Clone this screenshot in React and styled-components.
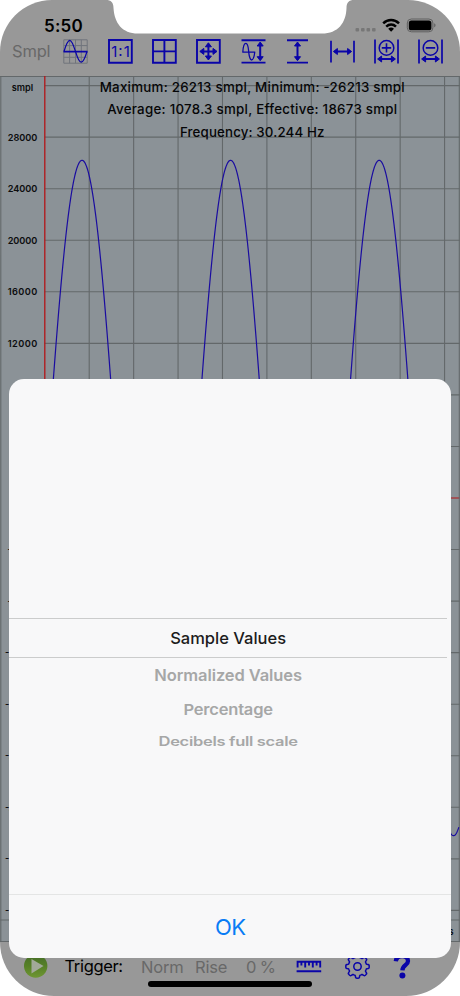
import styled, { createGlobalStyle } from "styled-components"

const GlobalStyle = createGlobalStyle`
*{
box-sizing:border-box;
}
body{
margin:0;
background:#fff;
font-family:Inter,"Liberation Sans",sans-serif;
}
`

const Phone = styled.main`
position:relative;
width:460px;
height:996px;
display:flex;
flex-direction:column;
overflow:hidden;
background:#989898;
border-radius:52px 52px 54px 54px;
`

const Notch = styled.svg`
position:absolute;
top:0;
left:106px;
`

const StatusBar = styled.header`
height:38px;
padding:11px 24px 0 44px;
display:flex;
justify-content:space-between;
align-items:flex-start;
`

const Time = styled.span`
font-size:17px;
line-height:30px;
font-weight:600;
letter-spacing:0.2px;
color:#000;
`

const StatusIcons = styled.div`
display:flex;
align-items:center;
height:28px;
`

const Toolbar = styled.nav`
height:38px;
padding:1px 0 0 12px;
display:flex;
align-items:flex-start;
`

const UnitLabel = styled.span`
width:51.3px;
font-size:16.5px;
line-height:24px;
letter-spacing:-0.2px;
color:#686868;
`

const IconButton = styled.button`
width:${({ $width }) => $width || 25}px;
height:25px;
padding:0;
margin-right:${({ $gap }) => $gap ?? 19.4}px;
border:none;
background:none;
flex-shrink:0;

svg{
display:block;
overflow:visible;
}
`

const Chart = styled.svg`
display:block;
flex-shrink:0;

text{
font-family:Inter,"Liberation Sans",sans-serif;
}
`

const BottomBar = styled.footer`
flex:1;
padding:12px 0 0 23px;
display:flex;
align-items:flex-start;
`

const BarText = styled.span`
width:${({ $width }) => $width}px;
font-size:16.5px;
line-height:${({ $dark }) => ($dark ? 25 : 26)}px;
letter-spacing:${({ $spacing }) => $spacing || 0}px;
white-space:nowrap;
color:${({ $dark }) => ($dark ? "#000" : "#686868")};
`

const HomeIndicator = styled.div`
position:absolute;
left:148px;
bottom:9px;
width:164px;
height:6px;
border-radius:3px;
background:#000;
`

const Sheet = styled.section`
position:absolute;
left:9.3px;
top:379px;
width:441.7px;
height:579px;
display:flex;
flex-direction:column;
border-radius:15px;
background:#f8f8f9;
overflow:hidden;
`

const Picker = styled.div`
flex:1;
padding-top:239px;
margin-right:4px;
display:flex;
flex-direction:column;
`

const Option = styled.div`
height:${({ $height }) => $height || 37}px;
display:flex;
justify-content:center;
align-items:center;
font-size:16.5px;
font-weight:600;
white-space:nowrap;
color:#a6a7a7;

span{
letter-spacing:${({ $spacing }) => $spacing || 0}px;
transform:scaleY(${({ $squash }) => $squash || 1});
}
`

const SelectedOption = styled(Option)`
border-top:1px solid #cbcccc;
border-bottom:1px solid #cbcccc;
font-weight:500;
color:#1c1c1c;
`

const OkButton = styled.button`
height:64px;
padding:0;
border:none;
border-top:1px solid #e4e5e5;
background:none;
font-family:inherit;
font-size:22px;
line-height:65px;
letter-spacing:-0.6px;
color:#087cf5;
`

const BLUE = "#0a04a8"

const AXIS_X = 44.8
const ZERO_Y = 422
const STEP_Y = 51.55
const STEP_X = 44.42
const AMPLITUDE = 337.7
const PERIOD = 148.6
const FIRST_PEAK = 82

const rows = Array.from({ length: 17 }, (_, i) => 8 - i)
const columns = Array.from({ length: 9 }, (_, i) => AXIS_X + STEP_X * (i + 1))

const wave = () => {
  const points = []
  for (let x = AXIS_X; x <= 459; x += 0.5) {
    const y = ZERO_Y - AMPLITUDE * Math.cos(((x - FIRST_PEAK) / PERIOD) * Math.PI * 2)
    points.push(`${x.toFixed(1)},${y.toFixed(2)}`)
  }
  return points.join(" ")
}

const Icon = ({ children, width = 25, strokeWidth = 1.9 }) => (
  <svg width={width} height="25" viewBox={`0 0 ${width} 25`} fill="none" stroke={BLUE} strokeWidth={strokeWidth}>
    {children}
  </svg>
)

// double headed arrows, shaft plus two solid heads
const ArrowV = ({ x, top = 3, bottom = 21.7 }) => (
  <g>
    <path d={`M${x} ${top + 2}V${bottom - 2}`} strokeWidth="2" />
    <path
      d={`M${x} ${top}l3 4h-6zM${x} ${bottom}l3-4h-6z`}
      fill={BLUE}
      strokeWidth="1"
      strokeLinejoin="round"
    />
  </g>
)

const ArrowH = ({ y, left = 3, right = 22 }) => (
  <g>
    <path d={`M${left + 2} ${y}H${right - 2}`} strokeWidth="2" />
    <path
      d={`M${left} ${y}l4-3v6zM${right} ${y}l-4-3v6z`}
      fill={BLUE}
      strokeWidth="1"
      strokeLinejoin="round"
    />
  </g>
)

const WaveGridIcon = () => (
  <Icon>
    <path d="M.8.8h23.4v23.4H.8zM6.6.8v23.4M12.5.8v23.4M18.3.8v23.4M.8 6.6h23.4M.8 18.3h23.4" stroke="#70747c" strokeWidth="1" />
    <path d="M.5 12.700h24" strokeWidth="1.700" />
    <path d="M1 12.500C3.200 5 5 1.300 6.800 1.300c2.200 0 3.800 5.200 5.700 11.200 1.900 6.200 3.600 10.700 5.700 10.700 2 0 3.600-3.500 5.800-10.700" strokeWidth="1.200" />
  </Icon>
)

const OneToOneIcon = () => (
  <Icon>
    <path d="M1 1h22.800v22.800H1z" />
    <text x="12.500" y="17.800" textAnchor="middle" fontSize="15" fontFamily="Inter, sans-serif" textLength="18.500" fill={BLUE} stroke="none">1:1</text>
  </Icon>
)

const GridIcon = () => (
  <Icon>
    <path d="M1 1h22.800v22.800H1zM12.400 1v22.800M1 12.400h22.800" />
  </Icon>
)

const MoveIcon = () => (
  <Icon>
    <path d="M1 1h22.800v22.800H1z" />
    <ArrowV x={12.4} top={3.8} bottom={21} />
    <ArrowH y={12.4} left={3.8} right={21} />
  </Icon>
)

const WaveHeightIcon = () => (
  <Icon>
    <path d="M.5 1.300h24M.5 23.600h24" />
    <path d="M1.800 13.200C2.100 8 3.500 4.400 4.900 4.400c3 0 2.300 7.800 3.400 12.500.7 3 1.200 4.100 2.200 4.100 1.500 0 2.800-3.500 3.300-8.200M1.300 13.200h12.800" strokeWidth="1.300" />
    <ArrowV x={19.2} />
  </Icon>
)

const HeightIcon = () => (
  <Icon>
    <path d="M2 1.300h21M2 23.600h21" />
    <ArrowV x={12.5} />
  </Icon>
)

const WidthIcon = () => (
  <Icon>
    <path d="M1 1.800v21.600M24 1.800v21.600" strokeWidth="1.700" />
    <ArrowH y={12.5} left={3.4} right={21.6} />
  </Icon>
)

const ZoomIcon = ({ plus }) => (
  <Icon>
    <path d="M1 .5v24M24 .5v24" strokeWidth="1.700" />
    <circle cx="12.500" cy="8.900" r="7.300" strokeWidth="1.500" />
    <path d={plus ? "M7.800 8.900h9.400M12.500 4.200v9.400" : "M7.800 8.900h9.400"} strokeWidth="1.600" />
    <ArrowH y={20} left={3.6} right={21.4} />
  </Icon>
)

const PlayIcon = () => (
  <svg width="26" height="25" viewBox="0 0 26 25">
    <defs>
      <linearGradient id="play" x1="0" y1="0" x2="0" y2="1">
        <stop offset="0" stopColor="#466d2a" />
        <stop offset=".5" stopColor="#568026" />
        <stop offset="1" stopColor="#6f9634" />
      </linearGradient>
    </defs>
    <circle cx="12.700" cy="12" r="11.700" fill="url(#play)" />
    <path d="M8.500 5v14.500L20.500 12z" fill="#a2a99a" />
  </svg>
)

const RulerIcon = () => (
  <Icon width={26}>
    <path d="M1.600 13.500V7.700h22.600v5.800M5.400 8v3.500M9.200 8v5.500M13 8v3.500M16.800 8v5.500M20.600 8v3.500M.6 17.300h24.600" strokeWidth="1.900" />
  </Icon>
)

const gearPath = () => {
  const pts = []
  for (let a = 0; a <= 360; a += 3) {
    const t = (a * Math.PI) / 180
    const r = 10.4 + 1.3 * Math.tanh(3 * Math.cos(t * 8 + Math.PI))
    pts.push(`${(12.5 + r * Math.sin(t)).toFixed(2)} ${(12.5 - r * Math.cos(t)).toFixed(2)}`)
  }
  return `M${pts.join("L")}Z`
}

const GearIcon = () => (
  <Icon strokeWidth={1.5}>
    <g transform="rotate(22.5 12.500 12.500)">
      <path d={gearPath()} strokeLinejoin="round" />
    </g>
    <circle cx="12.500" cy="12.500" r="3.700" />
  </Icon>
)

const HelpIcon = () => (
  <Icon width={18}>
    <path d="M1.800 7.300C2.200 3.600 4.700 2 8.200 2s5.800 1.800 5.800 4.900c0 4.400-5.500 4.300-5.600 9.500" strokeWidth="4.300" />
    <circle cx="8.400" cy="21.500" r="3" fill={BLUE} stroke="none" />
  </Icon>
)

const Scope = () => (
  <Chart width="460" height="866" viewBox="0 0 460 866">
    <rect width="460" height="866" fill="#8b9297" />
    <g stroke="#63686a" strokeWidth="1.100">
      {rows.map((n) => (
        <path key={n} d={`M${AXIS_X} ${ZERO_Y - n * STEP_Y}H460`} stroke={n === 0 ? "#b31418" : undefined} />
      ))}
      {columns.map((x) => (
        <path key={x} d={`M${x} 0V844`} />
      ))}
      <path d="M0 .5H460M0 844H460M0 865.500H460M.8 0V866M459.300 0V866" />
    </g>
    <path d={`M${AXIS_X} 0V844`} stroke="#b31418" strokeWidth="1.300" />
    <polyline points={wave()} fill="none" stroke="#1a0ca0" strokeWidth="1.200" />
    <g fontSize="9.200" fontWeight="600" textAnchor="middle" fill="#0c0d0e">
      <text x="22.500" y="14.500" textLength="21.500">smpl</text>
      {rows.filter((n) => n < 8).map((n) => (
        <text
          key={n}
          x={n < 0 ? 21.5 : 22.5}
          y={ZERO_Y - n * STEP_Y + 3.4}
          textLength={n === 0 ? undefined : Math.abs(n) < 3 ? (n < 0 ? 28 : 24) : n < 0 ? 33 : 29.5}
        >
          {n * 4000}
        </text>
      ))}
      <text x="451" y="859">s</text>
    </g>
    <g fontSize="13.300" fontWeight="500" textAnchor="middle" fill="#060607">
      <text x="252.200" y="16" textLength="305">Maximum: 26213 smpl, Minimum: -26213 smpl</text>
      <text x="252.200" y="38.300" textLength="290">Average: 1078.3 smpl, Effective: 18673 smpl</text>
      <text x="252.200" y="60.500" textLength="144.500">Frequency: 30.244 Hz</text>
    </g>
  </Chart>
)

const App = () => {
  return (
    <>
      <GlobalStyle />
      <Phone>
        <StatusBar>
          <Time>5:50</Time>
          <StatusIcons>
            <svg width="81" height="28" viewBox="0 0 81 28">
              <g fill="#777">
                <rect x=".5" y="17" width="3.600" height="3.600" rx="1" />
                <rect x="6" y="17" width="3.600" height="3.600" rx="1" />
                <rect x="11.500" y="17" width="3.600" height="3.600" rx="1" />
                <rect x="17" y="17" width="3.600" height="3.600" rx="1" />
              </g>
              <g fill="none" stroke="#000" strokeWidth="2.500">
                <path d="M28.200 12.300c4.500-4.300 11.300-4.300 15.800 0M31.200 15.600c2.900-2.700 6.900-2.700 9.800 0" />
              </g>
              <path d="M33.200 17.700c1.800-1.500 4-1.500 5.800 0l-2.900 3z" />
              <rect x="52.300" y="8" width="25.600" height="12.800" rx="4" fill="none" stroke="#606060" />
              <rect x="53.800" y="9.500" width="22.600" height="9.800" rx="2.600" />
              <path d="M79.200 12.300c1.800.6 1.800 3.400 0 4z" fill="#606060" />
            </svg>
          </StatusIcons>
        </StatusBar>

        <Toolbar>
          <UnitLabel>Smpl</UnitLabel>
          <IconButton><WaveGridIcon /></IconButton>
          <IconButton><OneToOneIcon /></IconButton>
          <IconButton><GridIcon /></IconButton>
          <IconButton><MoveIcon /></IconButton>
          <IconButton><WaveHeightIcon /></IconButton>
          <IconButton><HeightIcon /></IconButton>
          <IconButton><WidthIcon /></IconButton>
          <IconButton><ZoomIcon plus /></IconButton>
          <IconButton $gap={0}><ZoomIcon /></IconButton>
        </Toolbar>

        <Scope />

        <BottomBar>
          <IconButton $width={26} $gap={15.5}><PlayIcon /></IconButton>
          <BarText $dark $width={76.5} $spacing={-0.35}>Trigger:</BarText>
          <BarText $width={54} $spacing={-0.2}>Norm</BarText>
          <BarText $width={51} $spacing={-0.2}>Rise</BarText>
          <BarText $width={50} $spacing={-0.6}>0 %</BarText>
          <IconButton $width={26} $gap={23}><RulerIcon /></IconButton>
          <IconButton $gap={24}><GearIcon /></IconButton>
          <IconButton $width={18} $gap={0}><HelpIcon /></IconButton>
        </BottomBar>

        <Notch width="248" height="34" viewBox="0 0 248 34">
          <path d="M0 0C5 0 7.500 2.500 7.500 8 8.500 23 16 33.500 32 33.500H216C232 33.500 240 23 240.500 8 240.500 2.500 243 0 248 0Z" fill="#fff" />
        </Notch>
        <HomeIndicator />

        <Sheet>
          <Picker>
            <SelectedOption $height={39.5}><span>Sample Values</span></SelectedOption>
            <Option $height={35} $squash={0.98} $spacing={-0.1}><span>Normalized Values</span></Option>
            <Option $height={34} $squash={0.9} $spacing={-0.2}><span>Percentage</span></Option>
            <Option $height={29} $squash={0.78} $spacing={-0.3}><span>Decibels full scale</span></Option>
          </Picker>
          <OkButton>OK</OkButton>
        </Sheet>
      </Phone>
    </>
  )
}

export default App
